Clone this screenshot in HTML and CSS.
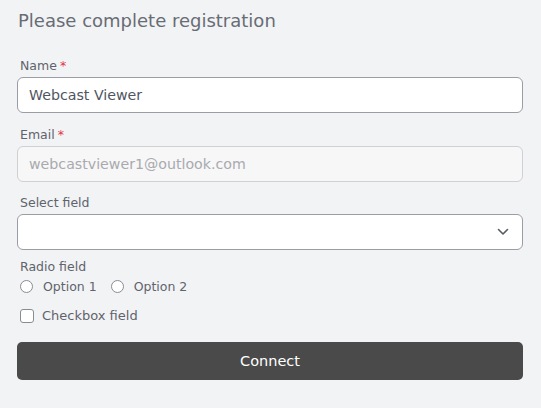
FILE: index.html
```html
<!DOCTYPE html>
<html>
<head>
<meta charset="utf-8">
<link rel="stylesheet" href="styles.css">
</head>
<body>
<form class="form">
  <h1 class="title">Please complete registration</h1>
  <div class="field">
    <label class="label">Name<span class="req">*</span></label>
    <input class="input" type="text" value="Webcast Viewer">
  </div>
  <div class="field">
    <label class="label">Email<span class="req">*</span></label>
    <input class="input input-disabled" type="text" value="webcastviewer1@outlook.com" disabled>
  </div>
  <div class="field">
    <label class="label">Select field</label>
    <div class="select">
      <svg class="chevron" width="12" height="8" viewBox="0 0 12 8"><path d="M1.5 1.5 L6 6 L10.5 1.5" fill="none" stroke="#555a63" stroke-width="1.6" stroke-linecap="round" stroke-linejoin="round"/></svg>
    </div>
  </div>
  <div class="field radio-field">
    <label class="label">Radio field</label>
    <div class="radios">
      <span class="radio-opt"><span class="radio"></span>Option 1</span>
      <span class="radio-opt"><span class="radio"></span>Option 2</span>
    </div>
  </div>
  <div class="check-row"><span class="checkbox"></span>Checkbox field</div>
  <button class="btn" type="button">Connect</button>
</form>
</body>
</html>
```
FILE: styles.css
```css
html, body {
  margin: 0;
  padding: 0;
  background: #f2f3f5;
}
body {
  font-family: "DejaVu Sans", "Noto Sans", sans-serif;
  padding: 0 18px 0 17px;
}
.form {
  display: flex;
  flex-direction: column;
}
.title {
  margin: 9px 0 0 1px;
  font-size: 18px;
  line-height: 24px;
  font-weight: normal;
  color: #686c74;
}
.field {
  display: flex;
  flex-direction: column;
  gap: 3px;
}
.title + .field { margin-top: 24px; }
.field + .field { margin-top: 12.5px; }
.label {
  font-size: 12.5px;
  line-height: 17px;
  color: #5f636c;
  padding-left: 3px;
}
.req {
  color: #e2334a;
  margin-left: 3px;
}
.input {
  box-sizing: border-box;
  height: 36px;
  width: 100%;
  margin: 0;
  border: 1px solid #9c9ca6;
  border-radius: 6px;
  background: #ffffff;
  padding: 0 11px;
  font-family: inherit;
  font-size: 14.2px;
  color: #4f5562;
  outline: none;
}
.input-disabled {
  background: #f7f7f8;
  border-color: #cfd0d4;
  color: #a9aaae;
}
.select {
  box-sizing: border-box;
  height: 36px;
  border: 1px solid #9c9ca6;
  border-radius: 6px;
  background: #ffffff;
  display: flex;
  align-items: center;
  justify-content: flex-end;
  padding-right: 13px;
}
.field + .radio-field { margin-top: 7.5px; gap: 3px; }
.radios {
  display: flex;
  gap: 14px;
  padding-left: 3px;
}
.radio-opt {
  display: flex;
  align-items: center;
  gap: 10px;
  font-size: 12.5px;
  line-height: 18px;
  color: #5f636c;
}
.radio {
  box-sizing: border-box;
  width: 13px;
  height: 13px;
  border: 1px solid #8a8c94;
  border-radius: 50%;
  background: #fff;
}
.check-row {
  margin-top: 11px;
  padding-left: 3px;
  display: flex;
  align-items: center;
  gap: 8px;
  font-size: 13px;
  line-height: 18px;
  color: #5f636c;
}
.checkbox {
  box-sizing: border-box;
  width: 14px;
  height: 14px;
  border: 1px solid #8a8c94;
  border-radius: 3px;
  background: #fff;
}
.btn {
  margin-top: 17px;
  height: 38px;
  border: none;
  border-radius: 5px;
  background: #4a4a4a;
  color: #ffffff;
  font-family: inherit;
  font-size: 14.5px;
  font-weight: 500;
}
```
